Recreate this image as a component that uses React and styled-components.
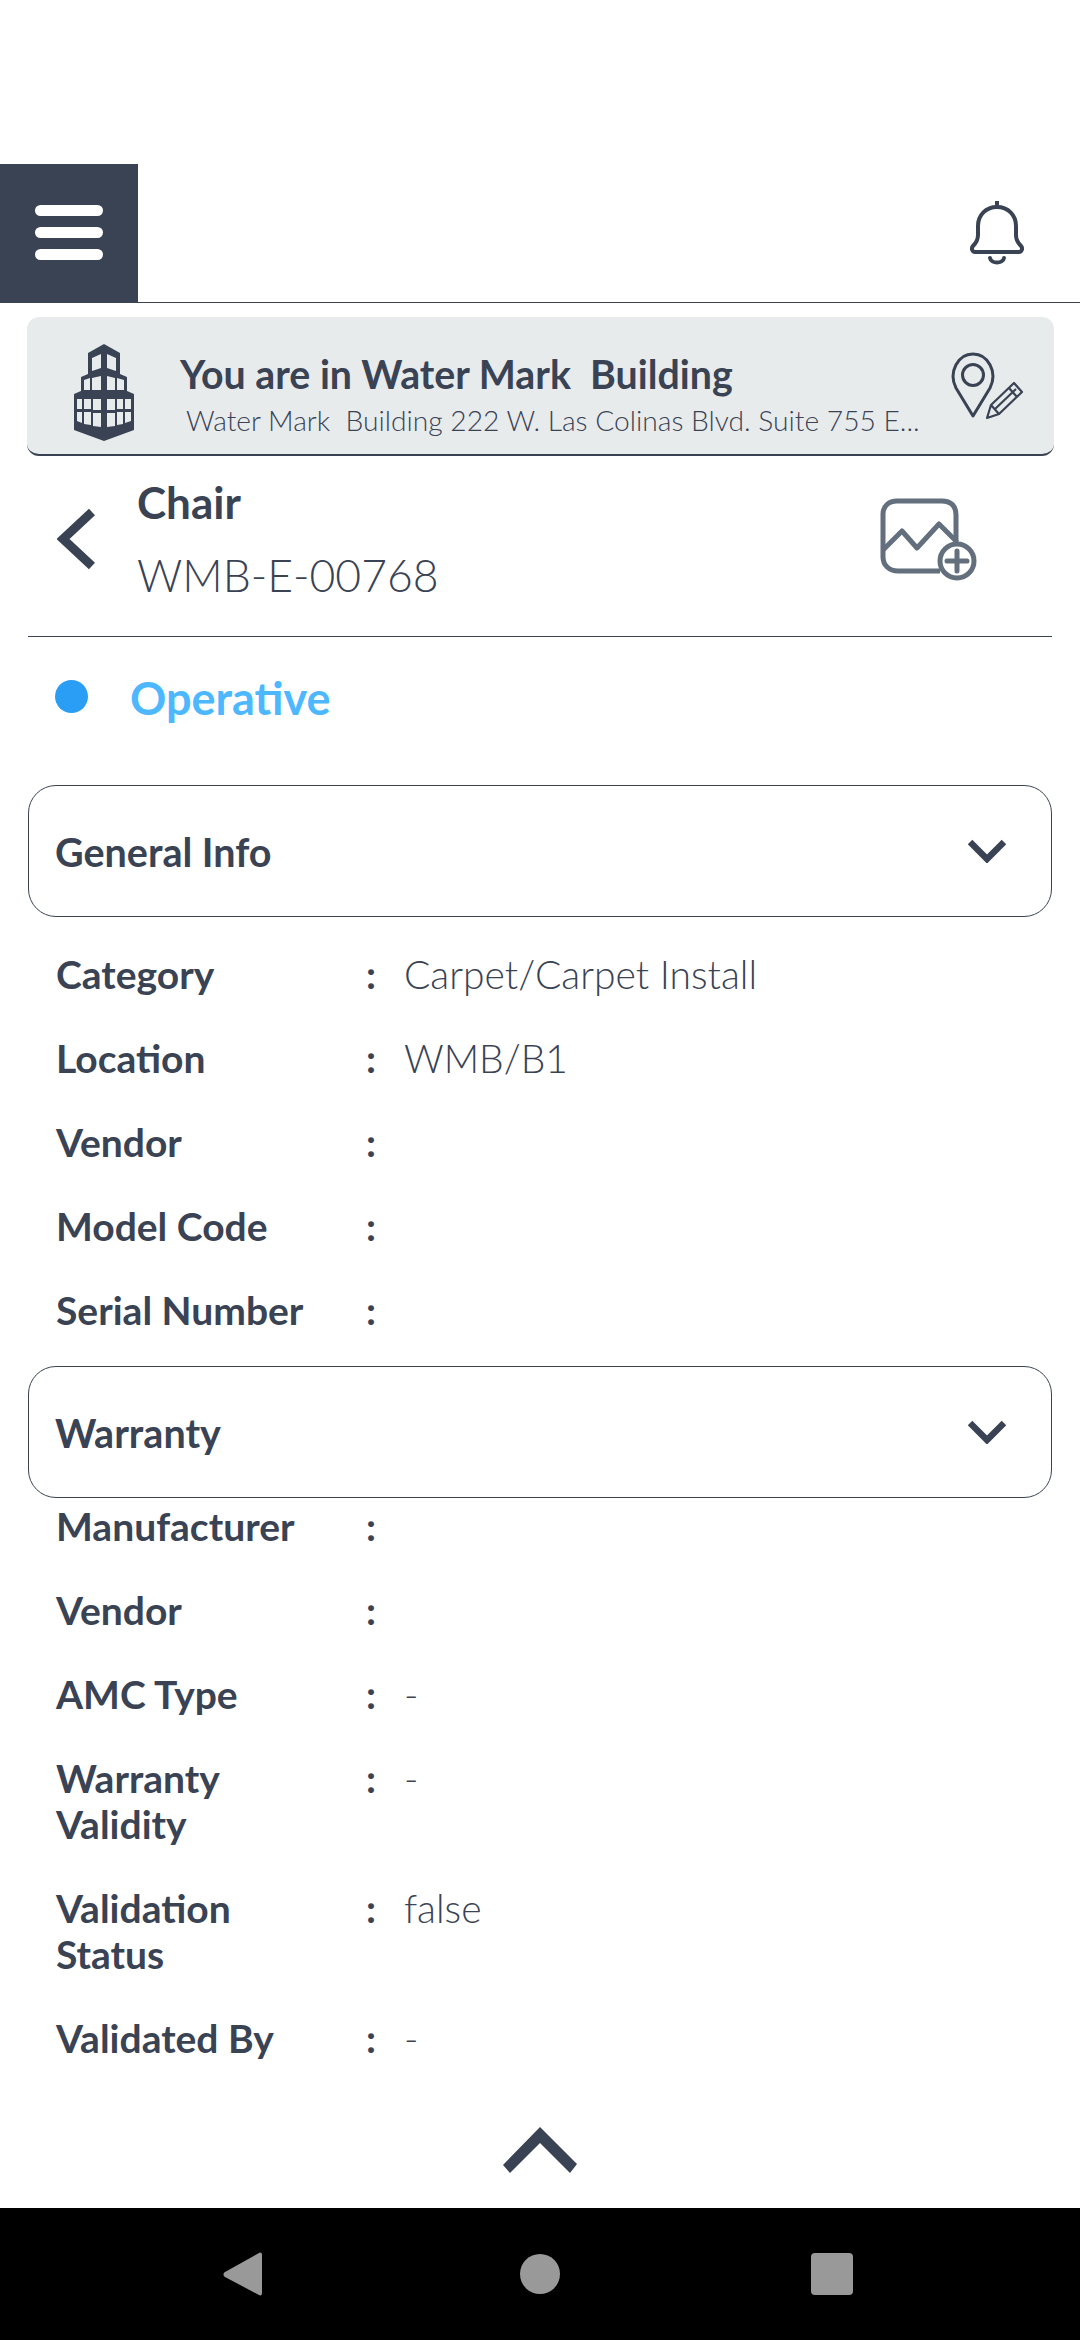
import React from "react";
import styled, {createGlobalStyle} from "styled-components";

const ink = "#3a4354";

const GlobalStyle = createGlobalStyle`
    html, body {
        margin: 0;
        padding: 0;
        background: #fff;
    }
    body {
        font-family: Lato, "Noto Sans", sans-serif;
        color: ${ink};
    }
`;

const Screen = styled.div`
    width: 1080px;
    height: 2340px;
    display: flex;
    flex-direction: column;
    overflow: hidden;
    background: #fff;
`;
const Main = styled.div`
    flex: 1;
    padding-top: 164px;
    display: flex;
    flex-direction: column;
`;

// top bar
const TopBar = styled.header`
    height: 138px;
    display: flex;
    align-items: flex-start;
    justify-content: space-between;
    border-bottom: 1.5px solid ${ink};
`;
const MenuButton = styled.div`
    width: 138px;
    height: 138px;
    background: ${ink};
    display: flex;
    flex-direction: column;
    gap: 11px;
    align-items: center;
    padding-top: 41px;
    box-sizing: border-box;
`;
const MenuBar = styled.span`
    display: block;
    width: 68px;
    height: 11px;
    border-radius: 6px;
    background: #fff;
`;
const BellWrap = styled.div`
    margin: 36px 54px 0 0;
    height: 66px;
`;

// building banner
const Banner = styled.section`
    margin: 14px 26px 0 27px;
    height: 139px;
    box-sizing: border-box;
    background: #e8ebec;
    border-radius: 12px;
    border-bottom: 2px solid ${ink};
    display: flex;
    align-items: flex-start;
`;
const BuildingWrap = styled.div`
    margin: 27px 0 0 47px;
    width: 60px;
`;
const BannerText = styled.div`
    margin: 34px 0 0 46px;
    width: 759px;
`;
const BannerTitle = styled.div`
    font-size: 39.3px;
    line-height: 46px;
    font-weight: 700;
    white-space: pre;
`;
const BannerSub = styled.div`
    margin: 6px 0 0 6px;
    font-size: 28.2px;
    line-height: 34px;
    font-weight: 300;
    white-space: pre;
`;
const PinWrap = styled.div`
    margin: 35px 0 0 10px;
`;

// asset heading
const AssetHead = styled.div`
    height: 181px;
    margin: 0 28px;
    box-sizing: border-box;
    border-bottom: 1.5px solid ${ink};
    display: flex;
    align-items: flex-start;
`;
const BackWrap = styled.div`
    margin: 52px 0 0 29px;
    width: 80px;
`;
const AssetText = styled.div`
    flex: 1;
    padding-top: 22px;
`;
const AssetName = styled.div`
    font-size: 44px;
    line-height: 48px;
    font-weight: 700;
`;
const AssetCode = styled.div`
    margin-top: 23px;
    font-size: 44.5px;
    line-height: 52px;
    font-weight: 300;
`;
const ImageWrap = styled.div`
    margin: 42px 74px 0 0;
`;

const Status = styled.div`
    display: flex;
    align-items: center;
    padding-left: 55px;
    margin-top: 35px;
    height: 50px;
`;
const StatusDot = styled.span`
    width: 33px;
    height: 33px;
    margin-top: -1px;
    border-radius: 50%;
    background: #2a9df4;
`;
const StatusLabel = styled.span`
    margin: 2px 0 0 42px;
    font-size: 45px;
    font-weight: 700;
    color: #4db8ff;
`;

// accordions + rows
const Accordion = styled.div`
    margin: ${p => p.$top}px 28px 0;
    height: 132px;
    box-sizing: border-box;
    border: 1.5px solid ${ink};
    border-radius: 28px;
    display: flex;
    align-items: center;
    justify-content: space-between;
    padding: 0 45px 0 26px;
    font-size: 39.5px;
    font-weight: 700;
`;
const Rows = styled.div`
    margin-top: ${p => p.$top}px;
    display: flex;
    flex-direction: column;
    gap: 38px;
    padding-left: 56px;
`;
const Row = styled.div`
    display: grid;
    grid-template-columns: 308px 40px 1fr;
    font-size: 39px;
    line-height: 46px;
`;
const Label = styled.div`
    font-weight: 700;
    padding-right: 38px;
`;
const Colon = styled.div`
    font-weight: 700;
    padding-left: 2px;
`;
const Value = styled.div`
    font-weight: 300;
`;
const CollapseWrap = styled.div`
    margin-top: 66px;
    display: flex;
    justify-content: center;
`;

// android nav
const NavBar = styled.nav`
    height: 132px;
    background: #000;
    display: flex;
    align-items: center;
    justify-content: center;
`;
const NavSlot = styled.div`
    width: 292px;
    display: flex;
    justify-content: center;
`;

const BellIcon = () => (
    <svg width="58" height="66" viewBox="0 0 58 66" fill="none" stroke={ink} strokeWidth="4">
        <path d="M29 1v6"/>
        <path d="M29 7c-11 0-19 8-19 19v9c0 5-3 9-5 11-2 2-1 6 2 6h44c3 0 4-4 2-6-2-2-5-6-5-11v-9c0-11-8-19-19-19z" strokeLinejoin="round"/>
        <path d="M22 58c1 6 13 6 14 0" strokeLinecap="round"/>
    </svg>
);

const BuildingIcon = () => (
    <svg width="60" height="97" viewBox="0 0 60 97">
        <path fill={ink} d="M30 0l16 9v21l7 3v14l7 3v36L30 97 0 86V50l7-3V33l7-3V9z"/>
        <g fill="#e8ebec">
            <path d="M18 14l9-4v14l-9 3zM33 10l9 4v13l-9-3z"/>
            <path d="M10 36l6-2v12h-6zM18 34l9-2v14h-9zM33 32l8 2v12h-8zM43 34l7 2v10h-7z"/>
            <path d="M3 55h5v10H3zM10 55h7v10h-7zM19 55h8v11h-8zM33 55h8v11h-8zM43 55h6v10h-6zM51 55h6v10h-6z"/>
            <path d="M3 68h5v11l-5-2zM10 68h7v13l-7-1zM19 69h8v14l-8-1zM33 69h8v13l-8 1zM43 68h6v12l-6 1zM51 68h6v9l-6 2z"/>
        </g>
    </svg>
);

const PinIcon = () => (
    <svg width="76" height="68" viewBox="0 0 76 68" fill="none" stroke={ink}>
        <path d="M24 64L7 36C-1 20 9 2 24 2s25 18 17 34z" strokeWidth="3" strokeLinejoin="round"/>
        <circle cx="24" cy="23" r="10.5" strokeWidth="3"/>
        <path d="M38 66l4-13 23-22 8 9-23 22z M42 53l8 9 M46 57l21-20 M60 36l8 9" strokeWidth="2.2" strokeLinejoin="round"/>
    </svg>
);

const BackIcon = () => (
    <svg width="38" height="62" viewBox="0 0 38 62" fill="none" stroke={ink} strokeWidth="9">
        <path d="M35 4L6 31l29 27"/>
    </svg>
);

const ImageAddIcon = () => (
    <svg width="98" height="84" viewBox="0 0 98 84" fill="none" stroke="#646f7e" strokeWidth="5">
        <path d="M60 73H18C9 73 3 67 3 59V16C3 8 9 3 17 3h45c9 0 14 5 14 14v28"/>
        <path d="M3 52l19-19 15 17 22-24 18 18" strokeLinejoin="round"/>
        <circle cx="77" cy="63" r="17" fill="#fff"/>
        <path d="M77 53v20M67 63h20" strokeLinecap="round"/>
    </svg>
);

const ChevronDown = () => (
    <svg width="38" height="24" viewBox="0 0 38 24" fill="none" stroke={ink} strokeWidth="6.5">
        <path d="M2 3l17 17L36 3"/>
    </svg>
);

const ChevronUp = () => (
    <svg width="74" height="46" viewBox="0 0 74 46">
        <path fill={ink} d="M37 0L74 37l-7 9L37 16 7 46 0 38z"/>
    </svg>
);

const NavBack = () => (
    <svg width="50" height="44" viewBox="0 0 50 44">
        <path fill="#999" d="M36 1c2-1 3 0 3 2v38c0 2-1 3-3 2L2 25c-2-1-2-4 0-5z"/>
    </svg>
);
const NavHome = () => (
    <svg width="40" height="40" viewBox="0 0 40 40"><circle cx="20" cy="20" r="20" fill="#999"/></svg>
);
const NavRecent = () => (
    <svg width="42" height="42" viewBox="0 0 42 42"><rect width="42" height="42" rx="4" fill="#999"/></svg>
);

const generalInfo = [
    ["Category", "Carpet/Carpet Install"],
    ["Location", "WMB/B1"],
    ["Vendor", ""],
    ["Model Code", ""],
    ["Serial Number", ""],
];
const warranty = [
    ["Manufacturer", ""],
    ["Vendor", ""],
    ["AMC Type", "-"],
    ["Warranty Validity", "-"],
    ["Validation Status", "false"],
    ["Validated By", "-"],
];

const renderRows = (rows) => rows.map(([label, value]) => (
    <Row key={label}>
        <Label>{label}</Label>
        <Colon>:</Colon>
        <Value>{value}</Value>
    </Row>
));

export default function App() {
    return (
        <Screen>
            <GlobalStyle/>
            <Main>
                <TopBar>
                    <MenuButton>
                        <MenuBar/>
                        <MenuBar/>
                        <MenuBar/>
                    </MenuButton>
                    <BellWrap><BellIcon/></BellWrap>
                </TopBar>
                <Banner>
                    <BuildingWrap><BuildingIcon/></BuildingWrap>
                    <BannerText>
                        <BannerTitle>You are in Water Mark  Building</BannerTitle>
                        <BannerSub>Water Mark  Building 222 W. Las Colinas Blvd. Suite 755 E...</BannerSub>
                    </BannerText>
                    <PinWrap><PinIcon/></PinWrap>
                </Banner>
                <AssetHead>
                    <BackWrap><BackIcon/></BackWrap>
                    <AssetText>
                        <AssetName>Chair</AssetName>
                        <AssetCode>WMB-E-00768</AssetCode>
                    </AssetText>
                    <ImageWrap><ImageAddIcon/></ImageWrap>
                </AssetHead>
                <Status>
                    <StatusDot/>
                    <StatusLabel>Operative</StatusLabel>
                </Status>
                <Accordion $top={63}>
                    General Info
                    <ChevronDown/>
                </Accordion>
                <Rows $top={34}>{renderRows(generalInfo)}</Rows>
                <Accordion $top={33}>
                    Warranty
                    <ChevronDown/>
                </Accordion>
                <Rows $top={5}>{renderRows(warranty)}</Rows>
                <CollapseWrap><ChevronUp/></CollapseWrap>
            </Main>
            <NavBar>
                <NavSlot><NavBack/></NavSlot>
                <NavSlot><NavHome/></NavSlot>
                <NavSlot><NavRecent/></NavSlot>
            </NavBar>
        </Screen>
    );
}
